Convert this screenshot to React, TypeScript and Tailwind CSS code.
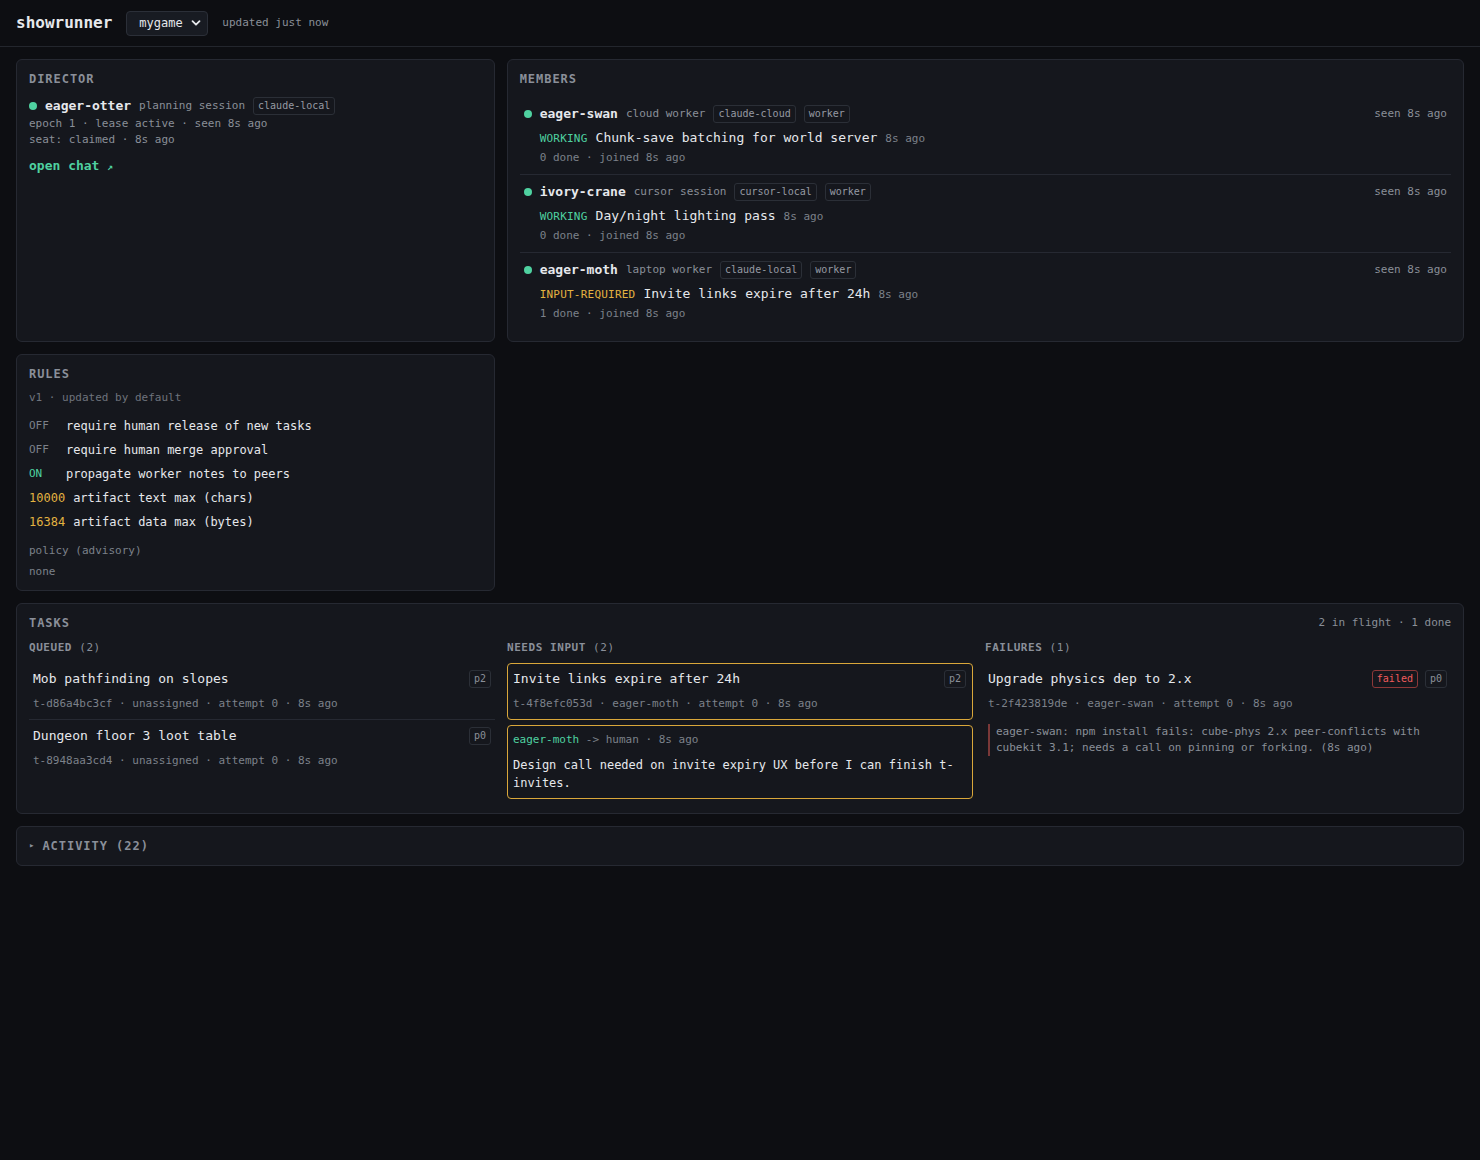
import React from "react";

const Tag = ({ children }: { children: React.ReactNode }) => (
  <span className="inline-flex h-[18px] items-center rounded-[3px] border border-[#2b2f37] px-1 text-[10px] leading-4 text-[#959aa3]">
    {children}
  </span>
);

const Dot = () => <span className="h-2 w-2 shrink-0 rounded-full bg-[#4fd1a0]" />;

const PanelTitle = ({ children, className = "" }: { children: React.ReactNode; className?: string }) => (
  <div className={"text-[12px] font-bold leading-4 tracking-[0.08em] text-[#8a8f99] " + className}>{children}</div>
);

type Member = {
  name: string;
  kind: string;
  tags: string[];
  state: string;
  stateColor: string;
  task: string;
  done: string;
};

const members: Member[] = [
  {
    name: "eager-swan",
    kind: "cloud worker",
    tags: ["claude-cloud", "worker"],
    state: "WORKING",
    stateColor: "text-[#4fd1a0]",
    task: "Chunk-save batching for world server",
    done: "0 done",
  },
  {
    name: "ivory-crane",
    kind: "cursor session",
    tags: ["cursor-local", "worker"],
    state: "WORKING",
    stateColor: "text-[#4fd1a0]",
    task: "Day/night lighting pass",
    done: "0 done",
  },
  {
    name: "eager-moth",
    kind: "laptop worker",
    tags: ["claude-local", "worker"],
    state: "INPUT-REQUIRED",
    stateColor: "text-[#e3b341]",
    task: "Invite links expire after 24h",
    done: "1 done",
  },
];

const Prio = ({ children }: { children: React.ReactNode }) => (
  <span className="inline-flex h-[18px] items-center rounded-[3px] border border-[#2b2f37] px-1 text-[10px] leading-4 text-[#8a8f98]">
    {children}
  </span>
);

function TaskCard({
  title,
  meta,
  prio,
  className,
  extra,
  children,
}: {
  title: string;
  meta: string;
  prio: string;
  className: string;
  extra?: React.ReactNode;
  children?: React.ReactNode;
}) {
  return (
    <div className={"pt-1.5 pb-[7px] " + className}>
      <div className="flex h-[18px] items-center justify-between">
        <span className="text-[13px] leading-5 text-[#e6e8ec]">{title}</span>
        <div className="flex items-center gap-[7px]">
          {extra}
          <Prio>{prio}</Prio>
        </div>
      </div>
      <div className="mt-2 text-[11px] leading-4 text-[#7c818a]">{meta}</div>
      {children}
    </div>
  );
}

export default function App() {
  return (
    <div className="min-h-[1160px] bg-[#0d0e12] font-['DejaVu_Sans_Mono',monospace] text-[#e6e8ec]">
      <header className="flex h-[47px] items-center border-b border-[#23262d] px-4">
        <span className="text-[16px] font-bold text-[#e6e8ec]">showrunner</span>
        <div className="ml-[14px] flex h-[25px] w-[82px] items-center justify-between rounded-[4px] border border-[#2b2f38] bg-[#181b22] pl-3 pr-[6px] text-[12px] text-[#e6e8ec]">
          <span>mygame</span>
          <svg width="10" height="10" viewBox="0 0 10 10" fill="none">
            <path d="M1.5 3.2 L5 6.7 L8.5 3.2" stroke="#e6e8ec" strokeWidth="1.8" strokeLinecap="round" strokeLinejoin="round" />
          </svg>
        </div>
        <span className="ml-[14px] text-[11px] text-[#8a8f98]">updated just now</span>
      </header>

      <main className="grid grid-cols-[1fr_2fr] gap-3 px-4 pt-3">
        {/* Director */}
        <section className="rounded-md border border-[#262932] bg-[#15171d] px-3 pt-[11px] pb-3">
          <PanelTitle className="mb-2.5">DIRECTOR</PanelTitle>
          <div className="flex h-[18px] items-center gap-2">
            <Dot />
            <span className="text-[13px] font-bold text-[#e6e8ec]">eager-otter</span>
            <span className="text-[11px] text-[#8a8f98]">planning session</span>
            <Tag>claude-local</Tag>
          </div>
          <div className="mt-px text-[11px] leading-4 text-[#8a8f98]">epoch 1 · lease active · seen 8s ago</div>
          <div className="text-[11px] leading-4 text-[#8a8f98]">seat: claimed · 8s ago</div>
          <div className="mt-2 text-[13px] font-bold leading-5 text-[#4fd1a0]">
            open chat <span className="text-[10px]">↗</span>
          </div>
        </section>

        {/* Members */}
        <section className="rounded-md border border-[#262932] bg-[#15171d] px-3 pt-[11px] pb-[11px]">
          <PanelTitle className="mb-2.5">MEMBERS</PanelTitle>
          {members.map((m, i) => (
            <div key={m.name} className={"px-1 pt-2 pb-2 " + (i > 0 ? "border-t border-[#262932]" : "")}>
              <div className="flex h-[18px] items-center justify-between">
                <div className="flex items-center gap-2">
                  <Dot />
                  <span className="text-[13px] font-bold text-[#e6e8ec]">{m.name}</span>
                  <span className="text-[11px] text-[#8a8f98]">{m.kind}</span>
                  {m.tags.map((t) => (
                    <Tag key={t}>{t}</Tag>
                  ))}
                </div>
                <span className="text-[11px] text-[#8a8f98]">seen 8s ago</span>
              </div>
              <div className="mt-[5px] flex items-baseline gap-2 pl-4 leading-5">
                <span className={"text-[11px] tracking-[0.02em] " + m.stateColor}>{m.state}</span>
                <span className="text-[13px] text-[#e6e8ec]">{m.task}</span>
                <span className="text-[11px] text-[#7c818a]">8s ago</span>
              </div>
              <div className="mt-px pl-4 text-[11px] leading-4 text-[#7c818a]">{m.done} · joined 8s ago</div>
            </div>
          ))}
        </section>

        {/* Rules */}
        <section className="rounded-md border border-[#262932] bg-[#15171d] px-3 pt-[11px] pb-[10px]">
          <PanelTitle className="mb-2">RULES</PanelTitle>
          <div className="text-[11px] leading-4 text-[#6e737c]">v1 · updated by default</div>
          <div className="mt-2.5 flex flex-col gap-1">
            {[
              { v: "OFF", c: "text-[11px] text-[#7c818a]", t: "require human release of new tasks" },
              { v: "OFF", c: "text-[11px] text-[#7c818a]", t: "require human merge approval" },
              { v: "ON", c: "text-[11px] text-[#4fd1a0]", t: "propagate worker notes to peers" },
              { v: "10000", c: "text-[12px] text-[#e3b341]", t: "artifact text max (chars)" },
              { v: "16384", c: "text-[12px] text-[#e3b341]", t: "artifact data max (bytes)" },
            ].map((r, i) => (
              <div key={i} className="flex h-5 items-center gap-2">
                <span className={"min-w-[29px] " + r.c}>{r.v}</span>
                <span className="text-[12px] text-[#e6e8ec]">{r.t}</span>
              </div>
            ))}
          </div>
          <div className="mt-[11px] text-[11px] leading-4 text-[#7c818a]">policy (advisory)</div>
          <div className="mt-[5px] text-[11px] leading-4 text-[#7c818a]">none</div>
        </section>
        <div />

        {/* Tasks */}
        <section className="col-span-2 rounded-md border border-[#262932] bg-[#15171d] px-3 pt-[11px] pb-[14px]">
          <div className="mb-2 flex items-center justify-between">
            <PanelTitle>TASKS</PanelTitle>
            <span className="text-[11px] text-[#8a8f98]">2 in flight · 1 done</span>
          </div>
          <div className="grid grid-cols-3 gap-3">
            {/* Queued */}
            <div>
              <div className="mb-[7px] text-[11px] leading-4 tracking-[0.05em] text-[#8a8f99]">
                <span className="font-bold">QUEUED</span> (2)
              </div>
              <TaskCard
                title="Mob pathfinding on slopes"
                meta="t-d86a4bc3cf · unassigned · attempt 0 · 8s ago"
                prio="p2"
                className="border-y border-transparent border-b-[#262932] px-1"
              />
              <TaskCard
                title="Dungeon floor 3 loot table"
                meta="t-8948aa3cd4 · unassigned · attempt 0 · 8s ago"
                prio="p0"
                className="border-y border-transparent px-1"
              />
            </div>

            {/* Needs input */}
            <div>
              <div className="mb-[7px] text-[11px] leading-4 tracking-[0.05em] text-[#8a8f99]">
                <span className="font-bold">NEEDS INPUT</span> (2)
              </div>
              <TaskCard
                title="Invite links expire after 24h"
                meta="t-4f8efc053d · eager-moth · attempt 0 · 8s ago"
                prio="p2"
                className="rounded-[4px] border border-[#d9a73a] pl-[5px] pr-1.5"
              />
              <div className="mt-[5px] rounded-[4px] border border-[#d9a73a] py-1.5 pl-[5px] pr-1.5">
                <div className="text-[11px] leading-4 text-[#7c818a]">
                  <span className="text-[#4fd1a0]">eager-moth</span> -&gt; human · 8s ago
                </div>
                <div className="mt-2 text-[12px] leading-[18px] text-[#e6e8ec]">
                  Design call needed on invite expiry UX before I can finish t-invites.
                </div>
              </div>
            </div>

            {/* Failures */}
            <div>
              <div className="mb-[7px] text-[11px] leading-4 tracking-[0.05em] text-[#8a8f99]">
                <span className="font-bold">FAILURES</span> (1)
              </div>
              <TaskCard
                title="Upgrade physics dep to 2.x"
                meta="t-2f423819de · eager-swan · attempt 0 · 8s ago"
                prio="p0"
                className="border-y border-transparent pl-[3px] pr-1"
                extra={
                  <span className="inline-flex h-[18px] items-center rounded-[3px] border border-[#8c3838] px-1 text-[10px] leading-4 text-[#ef5b5b]">
                    failed
                  </span>
                }
              >
                <div className="mt-3 border-l-2 border-[#7a3838] pl-[6px] text-[11px] leading-4 text-[#8a8f98]">
                  eager-swan: npm install fails: cube-phys 2.x peer-conflicts with cubekit 3.1; needs a call on pinning or forking. (8s ago)
                </div>
              </TaskCard>
            </div>
          </div>
        </section>

        {/* Activity */}
        <section className="col-span-2 flex h-[40px] items-center gap-2 rounded-md border border-[#262932] bg-[#15171d] px-3">
          <span className="text-[9px] text-[#8a8f99]">▸</span>
          <span className="text-[12px] font-bold tracking-[0.08em] text-[#8a8f99]">ACTIVITY (22)</span>
        </section>
      </main>
    </div>
  );
}
